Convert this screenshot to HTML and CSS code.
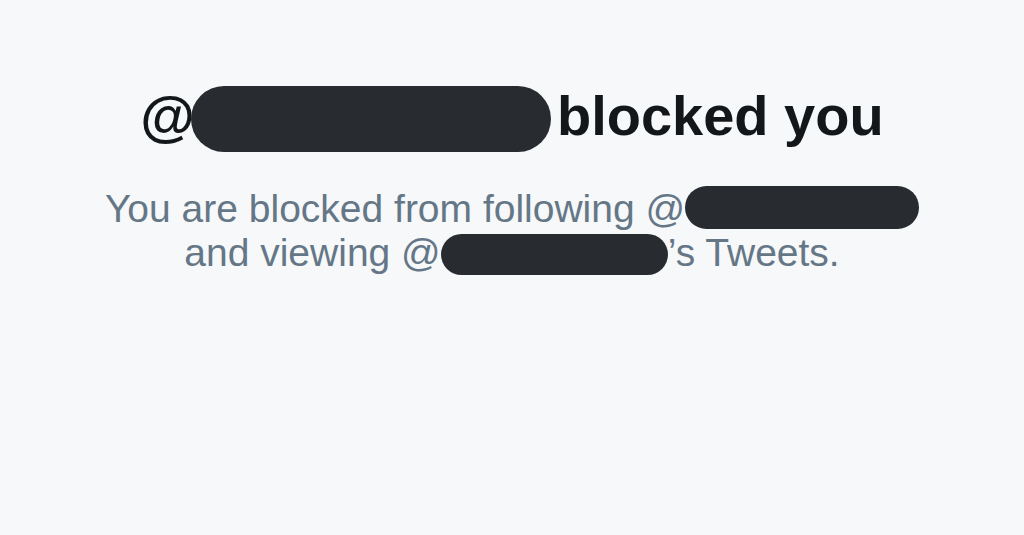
FILE: index.html
```html
<!DOCTYPE html>
<html lang="en">
<head>
    <meta charset="UTF-8">
    <meta name="viewport" content="width=device-width, initial-scale=1.0">
    <title>Blocked</title>
    <link rel="stylesheet" href="styles.css">
</head>
<body>
<div class="blocked">
    <h1 class="blocked-title">@<span class="redact redact-title"></span>blocked you</h1>
    <p class="blocked-text">
        You are blocked from following @<span class="redact redact-line1"></span><br>
        and viewing @<span class="redact redact-line2"></span>’s Tweets.
    </p>
</div>
</body>
</html>
```

FILE: styles.css
```css
:root {
    --bg: #f6f8fa;
    --ink: #14171a;
    --muted: #657786;
    --redact: #282c30;
}

body {
    margin: 0;
    background: var(--bg);
    font-family: "Liberation Sans", Arial, sans-serif;
    min-height: 100vh;
}

.blocked {
    padding-top: 83px;
    text-align: center;
}

.blocked-title {
    margin: 0;
    font-size: 56px;
    line-height: 66px;
    font-weight: bold;
    color: var(--ink);
}

.redact {
    display: inline-block;
    background: var(--redact);
}

.redact-title {
    width: 360px;
    height: 66px;
    border-radius: 33px;
    margin: 0 6px 0 -4px;
    vertical-align: -17px;
}

.blocked-text {
    margin: 34px 0 0;
    font-size: 39px;
    line-height: 44px;
    color: var(--muted);
}

.redact-line1 {
    width: 234px;
    height: 43px;
    border-radius: 22px;
    vertical-align: -7px;
}

.redact-line2 {
    width: 227px;
    height: 41px;
    border-radius: 21px;
    vertical-align: -9px;
}
```
